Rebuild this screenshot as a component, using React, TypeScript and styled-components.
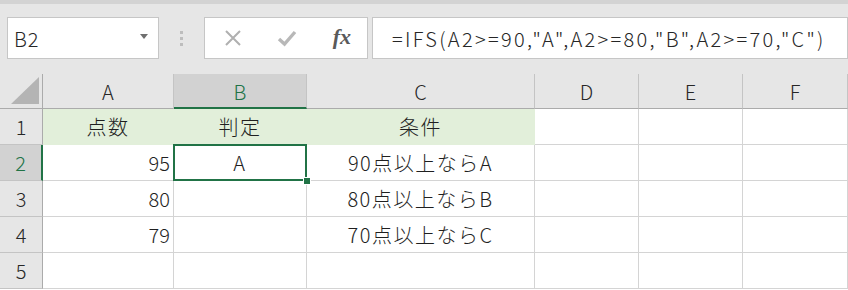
import React from "react";
import styled, { createGlobalStyle } from "styled-components";

const GlobalStyle = createGlobalStyle`
  body {
    margin: 0;
    background: #ffffff;
    font-family: "Noto Sans CJK JP", "Noto Sans", sans-serif;
    font-weight: 300;
    color: #1f1f1f;
  }
`;

const columns = ["A", "B", "C", "D", "E", "F"];
const widths = [43, 131, 133, 228, 104, 104, 105];

type Row = { a: string; b: string; c: string; header?: boolean };

const rows: Row[] = [
  { a: "点数", b: "判定", c: "条件", header: true },
  { a: "95", b: "A", c: "90点以上ならA" },
  { a: "80", b: "", c: "80点以上ならB" },
  { a: "79", b: "", c: "70点以上ならC" },
  { a: "", b: "", c: "" },
];

const App = () => {
  return (
    <>
      <GlobalStyle />
      <FormulaBar>
        <NameBox>
          <span>B2</span>
          <svg width="8" height="5" viewBox="0 0 8 5">
            <path d="M0 0h8L4 5z" fill="#6f6f6f" />
          </svg>
        </NameBox>
        <Grip>
          <i />
          <i />
          <i />
        </Grip>
        <ButtonBox>
          <svg width="18" height="18" viewBox="0 0 18 18">
            <path d="M2 2L16 16M16 2L2 16" stroke="#b0b0b0" strokeWidth="2" />
          </svg>
          <svg width="20" height="18" viewBox="0 0 20 18">
            <path d="M2 10L7.5 15L18 3" stroke="#b8b8b8" strokeWidth="3.4" fill="none" />
          </svg>
          <Fx>fx</Fx>
        </ButtonBox>
        <FormulaInput>=IFS(A2&gt;=90,"A",A2&gt;=80,"B",A2&gt;=70,"C")</FormulaInput>
      </FormulaBar>
      <Sheet $widths={widths}>
        <Corner>
          <svg width="28" height="27" viewBox="0 0 28 27">
            <path d="M0 27L28 0V27z" fill="#b4b4b4" />
          </svg>
        </Corner>
        {columns.map((c) => (
          <ColHeader key={c} $selected={c === "B"}>
            {c}
          </ColHeader>
        ))}
        {rows.map((r, i) => (
          <React.Fragment key={i}>
            <RowHeader $selected={i === 1}>{i + 1}</RowHeader>
            <Cell $fill={r.header} $align={r.header ? "center" : "right"}>
              {r.a}
            </Cell>
            <Cell $fill={r.header} $align="center" $active={i === 1}>
              {r.b}
            </Cell>
            <Cell $fill={r.header} $align="center">
              {r.c}
            </Cell>
            <Cell />
            <Cell />
            <Cell />
          </React.Fragment>
        ))}
      </Sheet>
    </>
  );
};

const FormulaBar = styled.div`
  border-top: 4px solid #d3d3d3;
  background: #e6e6e6;
  display: flex;
  align-items: flex-start;
  padding: 13px 0 0 7px;
  box-sizing: border-box;
  height: 74px;
`;

const Box = styled.div`
  height: 42px;
  box-sizing: border-box;
  border: 1px solid #c6c6c6;
  background: #ffffff;
  display: flex;
  align-items: center;
`;

const NameBox = styled(Box)`
  width: 152px;
  justify-content: space-between;
  padding: 0 10px 0 6px;
  font-size: 20px;
  letter-spacing: 1px;
  color: #262626;

  svg {
    margin-top: -4px;
  }
`;

const Grip = styled.div`
  width: 45px;
  height: 42px;
  display: flex;
  flex-direction: column;
  align-items: center;
  justify-content: center;
  gap: 3px;

  i {
    width: 3px;
    height: 3px;
    background: #bdbdbd;
  }
`;

const ButtonBox = styled(Box)`
  width: 164px;
  padding: 0 16px 0 19px;
  justify-content: space-between;
`;

const Fx = styled.span`
  font-family: "Liberation Serif", serif;
  font-style: italic;
  font-weight: bold;
  font-size: 22px;
  color: #5a5a5a;
  margin-top: -2px;
`;

const FormulaInput = styled(Box)`
  flex: 1;
  margin-left: 4px;
  padding-left: 19px;
  font-size: 20px;
  letter-spacing: 2.3px;
  color: #262626;
  white-space: nowrap;
`;

const Sheet = styled.div<{ $widths: number[] }>`
  display: grid;
  grid-template-columns: ${(p) => p.$widths.map((w) => `${w}px`).join(" ")};
  grid-template-rows: 35px;
  grid-auto-rows: 36px;
  font-size: 20px;
`;

const HeaderBase = styled.div`
  box-sizing: border-box;
  background: #e6e6e6;
  display: flex;
  align-items: center;
  justify-content: center;
  border-right: 1px solid #c4c4c4;
  border-bottom: 1px solid #ababab;
  color: #262626;
`;

const Corner = styled(HeaderBase)`
  align-items: flex-end;
  justify-content: flex-end;
  padding: 0 3px 4px 0;
  border-right-color: #ababab;
`;

const ColHeader = styled(HeaderBase)<{ $selected?: boolean }>`
  background: ${(p) => (p.$selected ? "#d2d2d2" : "#e6e6e6")};
  color: ${(p) => (p.$selected ? "#217346" : "#262626")};
  border-bottom: ${(p) => (p.$selected ? "2px solid #217346" : "1px solid #ababab")};
  padding-top: ${(p) => (p.$selected ? "1px" : "0")};
`;

const RowHeader = styled(HeaderBase)<{ $selected?: boolean }>`
  background: ${(p) => (p.$selected ? "#d2d2d2" : "#e6e6e6")};
  color: ${(p) => (p.$selected ? "#217346" : "#262626")};
  border-right: ${(p) => (p.$selected ? "2px solid #217346" : "1px solid #ababab")};
  border-bottom: 1px solid #c4c4c4;
`;

const Cell = styled.div<{ $fill?: boolean; $align?: string; $active?: boolean }>`
  position: relative;
  box-sizing: border-box;
  display: flex;
  align-items: center;
  justify-content: ${(p) => (p.$align === "right" ? "flex-end" : "center")};
  padding: 0 3px;
  background: ${(p) => (p.$fill ? "#e2efda" : "#ffffff")};
  border-right: 1px solid ${(p) => (p.$fill ? "#e2efda" : "#d4d4d4")};
  border-bottom: 1px solid ${(p) => (p.$fill ? "#e2efda" : "#d4d4d4")};
  white-space: nowrap;
  letter-spacing: ${(p) => (p.$align === "right" ? "0" : "1.5px")};

  ${(p) =>
    p.$active &&
    `
    &::after {
      content: "";
      position: absolute;
      top: -1px;
      left: -1px;
      right: -1px;
      bottom: -1px;
      border: 2px solid #217346;
      z-index: 2;
    }
    &::before {
      content: "";
      position: absolute;
      right: -4px;
      bottom: -4px;
      width: 6px;
      height: 6px;
      background: #217346;
      outline: 1px solid #ffffff;
      z-index: 3;
    }
  `}
`;

export default App;
